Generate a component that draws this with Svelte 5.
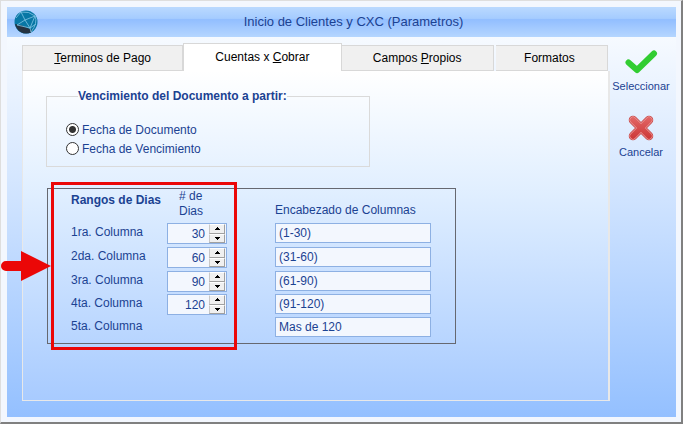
<script>
  let tabs = [
    { before: '', key: 'T', after: 'erminos de Pago' },
    { before: 'Cuentas x ', key: 'C', after: 'obrar' },
    { before: 'Campos ', key: 'P', after: 'ropios' },
    { before: 'Formatos', key: '', after: '' }
  ]
  let activeTab = 1
  let startFrom = 'documento'

  let ranges = [
    { label: '1ra. Columna', days: 30, heading: '(1-30)' },
    { label: '2da. Columna', days: 60, heading: '(31-60)' },
    { label: '3ra. Columna', days: 90, heading: '(61-90)' },
    { label: '4ta. Columna', days: 120, heading: '(91-120)' },
    { label: '5ta. Columna', days: null, heading: 'Mas de 120' }
  ]

  function step(index, amount) {
    ranges[index].days = Math.max(0, ranges[index].days + amount)
  }
</script>

<div class="window">
  <header class="title-bar">
    <svg class="logo" viewBox="0 0 24 24" aria-hidden="true">
      <circle cx="12" cy="12" r="11.5" fill="#0877a5" />
      <path d="M1 14 L8 15.500 L18 20 L17 22.500 A11.500 11.500 0 0 1 1 14Z" fill="#253342" />
      <g fill="none" stroke="#83c5e5" stroke-width=".8">
        <path d="M7 2 L11 10 L3 15 M11 10 L21 6 L16 18 L3 15 M16 18 L22 14 M16 18 L17 22 M11 10 L16 18" />
        <path d="M2 8 L7 2 Q15 1 21 6 Q24 13 17 22" />
      </g>
    </svg>
    <h1>Inicio de Clientes y CXC (Parametros)</h1>
  </header>

  <div class="body">
    <main>
      <div class="tabs" role="tablist">
        {#each tabs as tab, i}
          <button
            class="tab"
            class:active={i === activeTab}
            role="tab"
            aria-selected={i === activeTab}
            on:click={() => (activeTab = i)}
          >{tab.before}<u>{tab.key}</u>{tab.after}</button>
        {/each}
      </div>

      <div class="panel" role="tabpanel">
        <fieldset>
          <legend>Vencimiento del Documento a partir:</legend>
          <label>
            <input type="radio" name="start" value="documento" bind:group={startFrom} />
            Fecha de Documento
          </label>
          <label>
            <input type="radio" name="start" value="vencimiento" bind:group={startFrom} />
            Fecha de Vencimiento
          </label>
        </fieldset>

        <section class="ranges">
          <strong class="ranges-title">Rangos de Dias</strong>
          <span class="days-title"># de Dias</span>
          <span class="heading-title">Encabezado de Columnas</span>

          {#each ranges as range, i}
            <label class="range-label" for={range.days === null ? `heading-${i}` : `days-${i}`}>{range.label}</label>
            {#if range.days === null}
              <span></span>
            {:else}
              <div class="spinner">
                <input id="days-{i}" type="number" bind:value={range.days} />
                <div class="steps">
                  <button aria-label="Aumentar" on:click={() => step(i, 1)}>
                    <svg viewBox="0 0 5 3"><path d="M0 3h5v-1h-1v-1h-1v-1h-1v1h-1v1h-1z" /></svg>
                  </button>
                  <button aria-label="Disminuir" on:click={() => step(i, -1)}>
                    <svg viewBox="0 0 5 3"><path d="M0 0h5v1h-1v1h-1v1h-1v-1h-1v-1h-1z" /></svg>
                  </button>
                </div>
              </div>
            {/if}
            <input
              id="heading-{i}"
              class="heading"
              type="text"
              aria-label="Encabezado {range.label}"
              bind:value={range.heading}
            />
          {/each}

          <div class="highlight"></div>
          <svg class="arrow" viewBox="0 0 50 30" aria-hidden="true">
            <path d="M5 10H20V0L50 15L20 30V20H5A5 5 0 0 1 5 10Z" fill="#eb0707" />
          </svg>
        </section>
      </div>
    </main>

    <aside>
      <button class="action">
        <svg viewBox="0 0 34 26" aria-hidden="true">
          <path d="M4.500 13.500 L13 21 L30 4.500" fill="none" stroke="#32cd32" stroke-width="6" stroke-linecap="round" stroke-linejoin="round" />
        </svg>
        Seleccionar
      </button>
      <button class="action">
        <svg viewBox="0 0 34 26" aria-hidden="true">
          <defs>
            <linearGradient id="cross" gradientUnits="userSpaceOnUse" x1="0" y1="1" x2="0" y2="25">
              <stop offset="0" stop-color="#e36969" />
              <stop offset="1" stop-color="#cb3535" />
            </linearGradient>
          </defs>
          <g fill="none" stroke-linecap="round">
            <path d="M9 5 L25 21 M25 5 L9 21" stroke="#c23c3c" stroke-width="8.500" />
            <path d="M9 5 L25 21 M25 5 L9 21" stroke="#ee9a9a" stroke-width="7" />
            <path d="M9 5 L25 21 M25 5 L9 21" stroke="url(#cross)" stroke-width="5.500" />
          </g>
        </svg>
        Cancelar
      </button>
    </aside>
  </div>
</div>

<style>
  :global(body) {
    margin: 0;
    background: #f3f7fe;
  }

  * {
    box-sizing: border-box;
  }

  .window {
    display: flex;
    flex-direction: column;
    min-height: 100vh;
    padding: 6px 5px 5px 6px;
    border: 1px solid #dedede;
    border-right: 2px solid #808080;
    border-bottom: 2px solid #808080;
    background: #f3f7fe;
    color: #1b4292;
    font: 12px/16px 'Liberation Sans', Arial, sans-serif;
  }

  button,
  input {
    margin: 0;
    font: inherit;
    color: inherit;
  }

  .title-bar {
    display: flex;
    align-items: center;
    height: 30px;
    padding: 0 7px;
    background: linear-gradient(#bad9ff 0%, #a5ccff 38%, #92beff 42%, #b5d6ff 100%);
  }

  .logo {
    width: 24px;
    height: 24px;
  }

  h1 {
    flex: 1;
    margin: 0;
    font-size: 13px;
    font-weight: 400;
    text-align: center;
  }

  .body {
    display: flex;
    flex: 1;
    padding: 6px 4px 16px 15px;
    background: linear-gradient(#f6faff, #d4e6ff 38%, #94c0ff);
  }

  main {
    display: flex;
    flex: 1;
    flex-direction: column;
  }

  .tabs {
    display: grid;
    grid-template-columns: 161fr 158fr 152fr 114fr;
    align-items: end;
    height: 28px;
    padding-right: 2px;
  }

  .tab {
    height: 26px;
    padding: 0;
    border: 1px solid #d8d8d8;
    border-left-width: 0;
    background: #f0f0f0;
    color: #000;
  }

  .tab:first-child {
    border-left-width: 1px;
  }

  .tab:last-child {
    margin-left: 2px;
    padding-right: 4px;
  }

  .tab.active {
    height: 28px;
    padding-bottom: 2px;
    border-bottom: 0;
    border-left-width: 1px;
    background: #fff;
  }

  .panel {
    flex: 1;
    padding: 17px 23px;
    border: solid #e8e8e8;
    border-width: 0 2px 1px 1px;
    background: linear-gradient(#fff, #e1efff 36%, #a8cbff);
  }

  fieldset {
    width: 324px;
    height: 79px;
    margin: 0;
    padding: 16px 19px 0;
    border: 1px solid #dadada;
  }

  legend {
    margin-left: 12px;
    padding: 0;
    font-weight: 700;
  }

  fieldset label {
    display: flex;
    align-items: center;
    gap: 3px;
    height: 19px;
  }

  input[type='radio'] {
    width: 13px;
    height: 13px;
    appearance: none;
    border: 1px solid #333;
    border-radius: 50%;
    background: #fff;
  }

  input[type='radio']:checked {
    background: radial-gradient(circle, #333 3px, #fff 4px);
  }

  .ranges {
    position: relative;
    display: grid;
    grid-template-columns: 96px 60px 156px;
    grid-template-rows: 34px 24px 24px 23px 23px 21px;
    width: 409px;
    margin: 21px 0 0 1px;
    padding: 0 23px 5px;
    border: 1px solid #666870;
  }

  .ranges-title {
    align-self: center;
    padding-bottom: 12px;
  }

  .days-title {
    width: 36px;
    margin-left: 12px;
    line-height: 15px;
  }

  .heading-title {
    align-self: end;
    padding-bottom: 5px;
    margin-left: 48px;
    white-space: nowrap;
  }

  .range-label {
    line-height: 18px;
  }

  .spinner {
    display: flex;
    width: 60px;
    height: 21px;
    border: 1px solid #8db0e3;
    background: #f3f7fe;
  }

  .spinner input {
    flex: 1;
    width: 0;
    padding: 0 4px 0 0;
    border: 0;
    outline: none;
    background: transparent;
    text-align: right;
    appearance: textfield;
  }

  .spinner input::-webkit-inner-spin-button {
    appearance: none;
  }

  .steps {
    display: flex;
    flex-direction: column;
    width: 16px;
    margin-right: 1px;
  }

  .steps button {
    display: flex;
    flex: 1;
    align-items: center;
    justify-content: center;
    padding: 0;
    border: 1px solid;
    border-color: #fff #a0a0a0 #a0a0a0 #c8c8c8;
    background: #f0f0f0;
  }

  .steps svg {
    width: 5px;
    height: 3px;
    fill: #000;
  }

  .heading {
    width: 156px;
    height: 20px;
    margin-left: 48px;
    padding: 0 3px;
    border: 1px solid #8db0e3;
    outline: none;
    background: #f3f7fe;
  }

  /* callout drawn over the day ranges */
  .highlight {
    position: absolute;
    top: -7px;
    left: 3px;
    width: 186px;
    height: 168px;
    border: 3px solid #eb0707;
    pointer-events: none;
  }

  .arrow {
    position: absolute;
    top: 62px;
    left: -47px;
    width: 50px;
    height: 30px;
    pointer-events: none;
  }

  aside {
    display: flex;
    flex-direction: column;
    align-items: center;
    gap: 21px;
    width: 62px;
    padding-top: 6px;
  }

  .action {
    display: flex;
    flex-direction: column;
    align-items: center;
    gap: 3px;
    padding: 0;
    border: 0;
    background: none;
    font-size: 11px;
  }

  .action svg {
    width: 34px;
    height: 26px;
  }
</style>
